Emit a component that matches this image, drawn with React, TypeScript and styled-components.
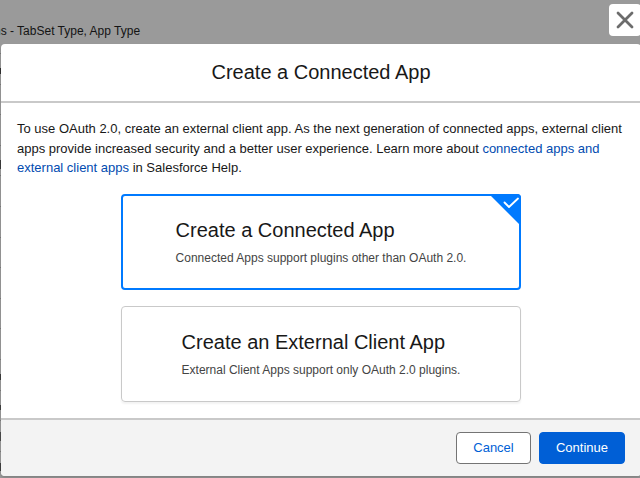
import React from "react";
import styled, { createGlobalStyle } from "styled-components";

const GlobalStyle = createGlobalStyle`
  *, *::before, *::after { box-sizing: border-box; }
  html, body { margin: 0; padding: 0; overflow: hidden; }
  body { font-family: "Liberation Sans", Arial, sans-serif; font-size: 13px; color: #181818; }
  h2, h3, p { margin: 0; font-weight: 400; }
`;

const Screen = styled.div`
  position: relative;
  width: 640px;
  height: 478px;
  overflow: hidden;
  background: #9a9a9a;
`;

const PageBehind = styled.div`
  display: flex;
  flex-direction: column;
  height: 100%;
`;

const Crumb = styled.p`
  height: 53px;
  flex: none;
  padding-top: 24px;
  margin-left: -6px;
  font-size: 12px;
  line-height: 14px;
  white-space: nowrap;
  color: #141414;
`;

const TableRow = styled.div`
  flex: none;
  width: 1px;
  height: 30.6px;
  border-top: 1px solid #7c7c7c;
`;

const Sliver = styled.div<{ $top: number; $size: number; $tone: string }>`
  width: 1px;
  height: ${(p) => p.$size}px;
  margin-top: ${(p) => p.$top}px;
  background: ${(p) => p.$tone};
`;

const Overlay = styled.div`
  position: absolute;
  top: 4px;
  left: 1px;
  width: 640px;
  display: flex;
  flex-direction: column;
`;

const CloseButton = styled.button`
  align-self: flex-end;
  display: flex;
  align-items: center;
  justify-content: center;
  width: 32px;
  height: 32px;
  margin-bottom: 8px;
  padding: 0;
  border: 0;
  border-radius: 4px;
  background: #fff;
`;

const Modal = styled.section`
  height: 432px;
  display: flex;
  flex-direction: column;
  border-radius: 4px;
  overflow: hidden;
  background: #fff;
  box-shadow: 0 2px 3px rgba(0, 0, 0, 0.16);
`;

const Header = styled.header`
  height: 59px;
  flex: none;
  padding-top: 16px;
  border-bottom: 2px solid #c9c9c9;
  text-align: center;
`;

const Title = styled.h2`
  font-size: 20px;
  line-height: 25px;
`;

const Body = styled.div`
  flex: 1;
  display: flex;
  flex-direction: column;
  align-items: center;
  gap: 16px;
  padding: 16px 16px 0;
`;

const Intro = styled.p`
  width: 608px;
  height: 59px;
  line-height: 19.5px;
`;

const Link = styled.a`
  color: #014bb0;
  text-decoration: none;
`;

const Card = styled.div<{ $selected?: boolean }>`
  position: relative;
  width: 400px;
  height: 96px;
  flex: none;
  display: flex;
  justify-content: center;
  align-items: center;
  border: ${(p) => (p.$selected ? "2px solid #007aff" : "1px solid #c9c9c9")};
  border-radius: 4px;
  box-shadow: ${(p) => (p.$selected ? "none" : "0 2px 2px rgba(0, 0, 0, 0.05)")};
`;

const CardText = styled.div`
  display: flex;
  flex-direction: column;
  gap: 6px;
`;

const CardTitle = styled.h3`
  font-size: 20px;
  line-height: 25px;
`;

const CardNote = styled.p`
  font-size: 12px;
  line-height: 18px;
  color: #444;
`;

const CornerMark = styled.svg`
  position: absolute;
  top: -2px;
  right: -2px;
  border-top-right-radius: 4px;
`;

const Footer = styled.footer`
  height: 58px;
  flex: none;
  display: flex;
  justify-content: flex-end;
  gap: 8px;
  padding: 12px 16px 0;
  border-top: 2px solid #c9c9c9;
  background: #f3f3f3;
`;

const Button = styled.button<{ $primary?: boolean }>`
  height: 32px;
  width: ${(p) => (p.$primary ? 86 : 75)}px;
  padding: 0;
  font: 13px/30px "Liberation Sans", Arial, sans-serif;
  border: 1px solid ${(p) => (p.$primary ? "#005fd6" : "#747474")};
  border-radius: 4px;
  background: ${(p) => (p.$primary ? "#005fd6" : "#fff")};
  color: ${(p) => (p.$primary ? "#fff" : "#005fd6")};
`;

type Mark = { top: number; size: number; tone: string } | null;

const rows: Mark[] = [
  { top: 14, size: 6, tone: "#303030" },
  null,
  null,
  { top: 14, size: 9, tone: "#3c3c3c" },
  null,
  null,
  null,
  null,
  null,
  null,
  { top: 14, size: 6, tone: "#3c3c3c" },
  { top: 14, size: 5, tone: "#404040" },
  { top: 11, size: 9, tone: "#4c4c4c" },
  { top: 11, size: 8, tone: "#404040" },
];

export default function App() {
  return (
    <Screen>
      <GlobalStyle />
      <PageBehind>
        <Crumb>ns - TabSet Type, App Type</Crumb>
        {rows.map((mark, i) => (
          <TableRow key={i}>
            {mark && <Sliver $top={mark.top} $size={mark.size} $tone={mark.tone} />}
          </TableRow>
        ))}
      </PageBehind>
      <Overlay>
        <CloseButton aria-label="Close">
          <svg width="32" height="32" viewBox="0 0 32 32" fill="none">
            <path d="M9 9L23 23M23 9L9 23" stroke="#6c6c6c" strokeWidth="2.8" strokeLinecap="round" />
          </svg>
        </CloseButton>
        <Modal>
          <Header>
            <Title>Create a Connected App</Title>
          </Header>
          <Body>
            <Intro>
              To use OAuth 2.0, create an external client app. As the next generation of connected
              apps, external client apps provide increased security and a better user experience.
              Learn more about <Link>connected apps and external client apps</Link> in Salesforce
              Help.
            </Intro>
            <Card $selected>
              <CardText>
                <CardTitle>Create a Connected App</CardTitle>
                <CardNote>Connected Apps support plugins other than OAuth 2.0.</CardNote>
              </CardText>
              <CornerMark width="32" height="32" viewBox="0 0 32 32" fill="none">
                <path d="M0 0H32V32Z" fill="#007aff" />
                <path
                  d="M15.5 8.5L20 13L29 4.5"
                  stroke="#fff"
                  strokeWidth="1.8"
                  strokeLinecap="round"
                  strokeLinejoin="round"
                />
              </CornerMark>
            </Card>
            <Card>
              <CardText>
                <CardTitle>Create an External Client App</CardTitle>
                <CardNote>External Client Apps support only OAuth 2.0 plugins.</CardNote>
              </CardText>
            </Card>
          </Body>
          <Footer>
            <Button>Cancel</Button>
            <Button $primary>Continue</Button>
          </Footer>
        </Modal>
      </Overlay>
    </Screen>
  );
}
